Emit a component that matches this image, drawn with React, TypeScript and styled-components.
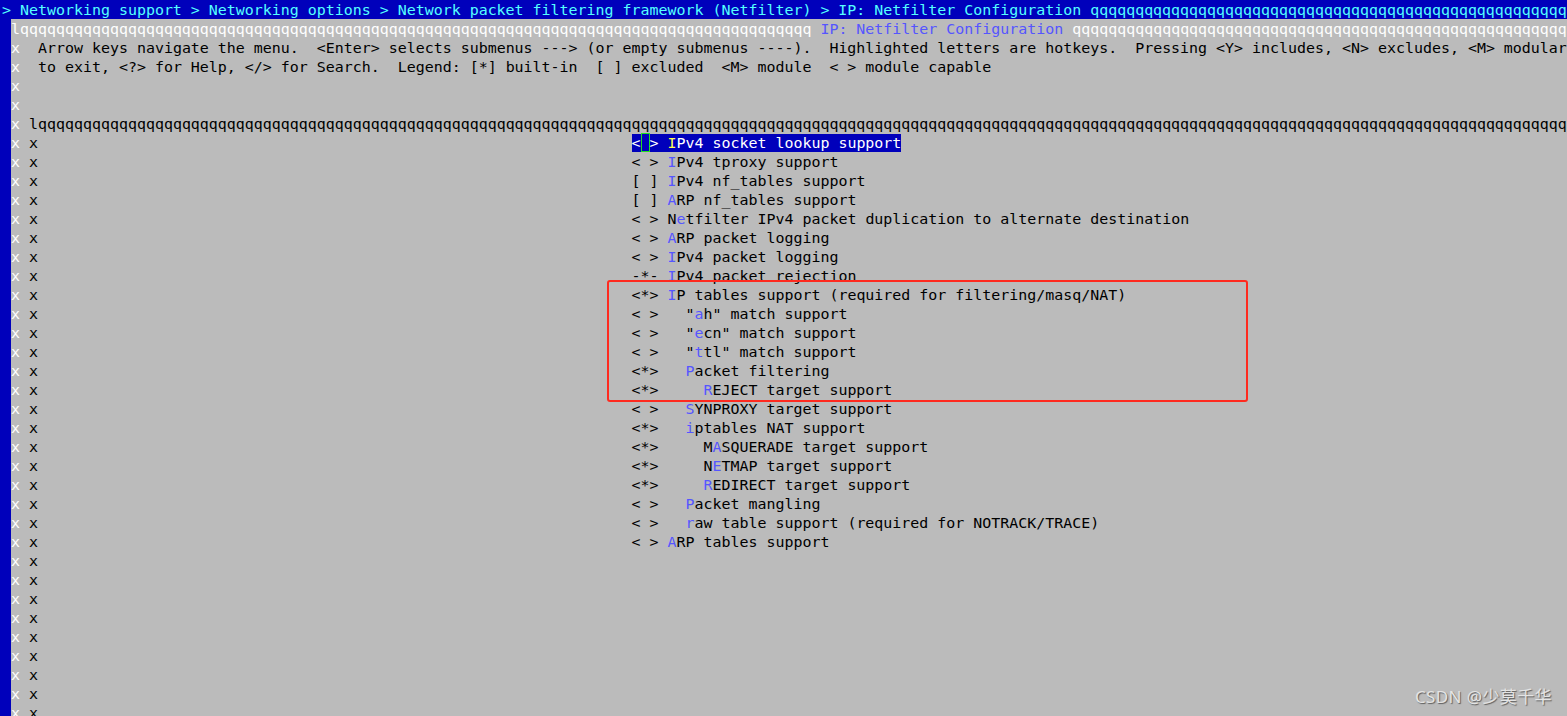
import styled, { createGlobalStyle } from 'styled-components';

const BLUE = '#0000bb';
const GREY = '#bbbbbb';

const GlobalStyle = createGlobalStyle`
	html, body {
		margin: 0;
		padding: 0;
		background: ${BLUE};
	}
	body {
		overflow: hidden;
	}
`;

const Screen = styled.div`
	position: relative;
	width: 1567px;
	height: 716px;
	overflow: hidden;
	background: ${BLUE};
	display: flex;
	flex-direction: column;
	font-family: 'DejaVu Sans Mono', 'Liberation Mono', monospace;
	font-size: 14.95px;
`;

// rows are 19px apart; the taller line-height only nudges glyphs down a pixel
const TitleBar = styled.div`
	height: 19px;
	line-height: 21px;
	flex-shrink: 0;
	padding-left: 2px;
	color: #55ffff;
	white-space: pre;
	overflow: hidden;
`;

const Dialog = styled.div`
	flex: 1;
	margin-left: 11px;
	background: ${GREY};
	color: #000;
	display: flex;
	flex-direction: column;
	overflow: hidden;
`;

const Line = styled.div`
	height: 19px;
	line-height: 21px;
	flex-shrink: 0;
	white-space: pre;
	overflow: hidden;
`;

const Bright = styled.span`
	color: #ffffff;
`;

const Hot = styled.span<{ $selected?: boolean }>`
	color: ${({ $selected }) => ($selected ? '#ffff55' : '#5555ff')};
`;

const Gap = styled.span<{ $cols: number }>`
	display: inline-block;
	width: ${({ $cols }) => $cols}ch;
`;

const Item = styled.span<{ $selected?: boolean }>`
	background: ${({ $selected }) => ($selected ? BLUE : 'transparent')};
	color: ${({ $selected }) => ($selected ? '#ffffff' : '#000000')};
`;

const Cursor = styled.span`
	display: inline-block;
	width: 1ch;
	height: 19px;
	vertical-align: top;
	box-sizing: border-box;
	border: 1px solid #22dd22;
`;

const Annotation = styled.div`
	position: absolute;
	left: 607px;
	top: 280px;
	width: 641px;
	height: 122px;
	box-sizing: border-box;
	border: 2.5px solid #ff2a1f;
	border-radius: 3px;
	pointer-events: none;
`;

const Watermark = styled.div`
	position: absolute;
	right: 15px;
	bottom: 9px;
	font-family: 'Noto Sans', 'Noto Sans CJK SC', sans-serif;
	font-size: 17px;
	letter-spacing: 0.4px;
	line-height: 20px;
	color: #e4e4e4;
	text-shadow: 1px 1px 1px rgba(60, 60, 60, 0.75);
	white-space: nowrap;
`;

type MenuItem = {
	box: string;
	text: string;
	hot: number;
	indent?: number;
	selected?: boolean;
};

const items: MenuItem[] = [
	{ box: '< >', text: 'IPv4 socket lookup support', hot: 0, selected: true },
	{ box: '< >', text: 'IPv4 tproxy support', hot: 0 },
	{ box: '[ ]', text: 'IPv4 nf_tables support', hot: 0 },
	{ box: '[ ]', text: 'ARP nf_tables support', hot: 0 },
	{ box: '< >', text: 'Netfilter IPv4 packet duplication to alternate destination', hot: 1 },
	{ box: '< >', text: 'ARP packet logging', hot: 0 },
	{ box: '< >', text: 'IPv4 packet logging', hot: 0 },
	{ box: '-*-', text: 'IPv4 packet rejection', hot: 0 },
	{ box: '<*>', text: 'IP tables support (required for filtering/masq/NAT)', hot: 0 },
	{ box: '< >', indent: 2, text: '"ah" match support', hot: 1 },
	{ box: '< >', indent: 2, text: '"ecn" match support', hot: 1 },
	{ box: '< >', indent: 2, text: '"ttl" match support', hot: 1 },
	{ box: '<*>', indent: 2, text: 'Packet filtering', hot: 0 },
	{ box: '<*>', indent: 4, text: 'REJECT target support', hot: 0 },
	{ box: '< >', indent: 2, text: 'SYNPROXY target support', hot: 0 },
	{ box: '<*>', indent: 2, text: 'iptables NAT support', hot: 0 },
	{ box: '<*>', indent: 4, text: 'MASQUERADE target support', hot: 1 },
	{ box: '<*>', indent: 4, text: 'NETMAP target support', hot: 1 },
	{ box: '<*>', indent: 4, text: 'REDIRECT target support', hot: 0 },
	{ box: '< >', indent: 2, text: 'Packet mangling', hot: 0 },
	{ box: '< >', indent: 2, text: 'raw table support (required for NOTRACK/TRACE)', hot: 0 },
	{ box: '< >', text: 'ARP tables support', hot: 0 },
];

const EMPTY_ROWS = 9;
const q = (n: number) => 'q'.repeat(n);

function MenuRow({ item }: { item?: MenuItem }) {
	return (
		<Line>
			<Bright>x</Bright> x
			{item && (
				<>
					<Gap $cols={66} />
					<Item $selected={item.selected}>
						{item.selected ? (
							<>
								{'<'}
								<Cursor />
								{'>'}
							</>
						) : (
							item.box
						)}
						{' ' + ' '.repeat(item.indent ?? 0)}
						{item.text.slice(0, item.hot)}
						<Hot $selected={item.selected}>{item.text[item.hot]}</Hot>
						{item.text.slice(item.hot + 1)}
					</Item>
				</>
			)}
		</Line>
	);
}

export default function App() {
	return (
		<>
			<GlobalStyle />
			<Screen>
				<TitleBar>
					{'> Networking support > Networking options > Network packet filtering framework (Netfilter) > IP: Netfilter Configuration ' +
						q(80)}
				</TitleBar>
				<Dialog>
					<Line>
						<Bright>{'l' + q(88) + ' '}</Bright>
						<Hot>IP: Netfilter Configuration</Hot>
						<Bright>{' ' + q(80)}</Bright>
					</Line>
					<Line>
						<Bright>x</Bright>
						{'  Arrow keys navigate the menu.  <Enter> selects submenus ---> (or empty submenus ----).  Highlighted letters are hotkeys.  Pressing <Y> includes, <N> excludes, <M> modularizes features.  Press <Esc><Esc>'}
					</Line>
					<Line>
						<Bright>x</Bright>
						{'  to exit, <?> for Help, </> for Search.  Legend: [*] built-in  [ ] excluded  <M> module  < > module capable'}
					</Line>
					<Line>
						<Bright>x</Bright>
					</Line>
					<Line>
						<Bright>x</Bright>
					</Line>
					<Line>
						<Bright>x</Bright>
						{' l' + q(200)}
					</Line>
					{items.map((item) => (
						<MenuRow key={item.text} item={item} />
					))}
					{Array.from({ length: EMPTY_ROWS }, (_, i) => (
						<MenuRow key={i} />
					))}
				</Dialog>
				<Annotation />
				<Watermark>CSDN @少莫千华</Watermark>
			</Screen>
		</>
	);
}
